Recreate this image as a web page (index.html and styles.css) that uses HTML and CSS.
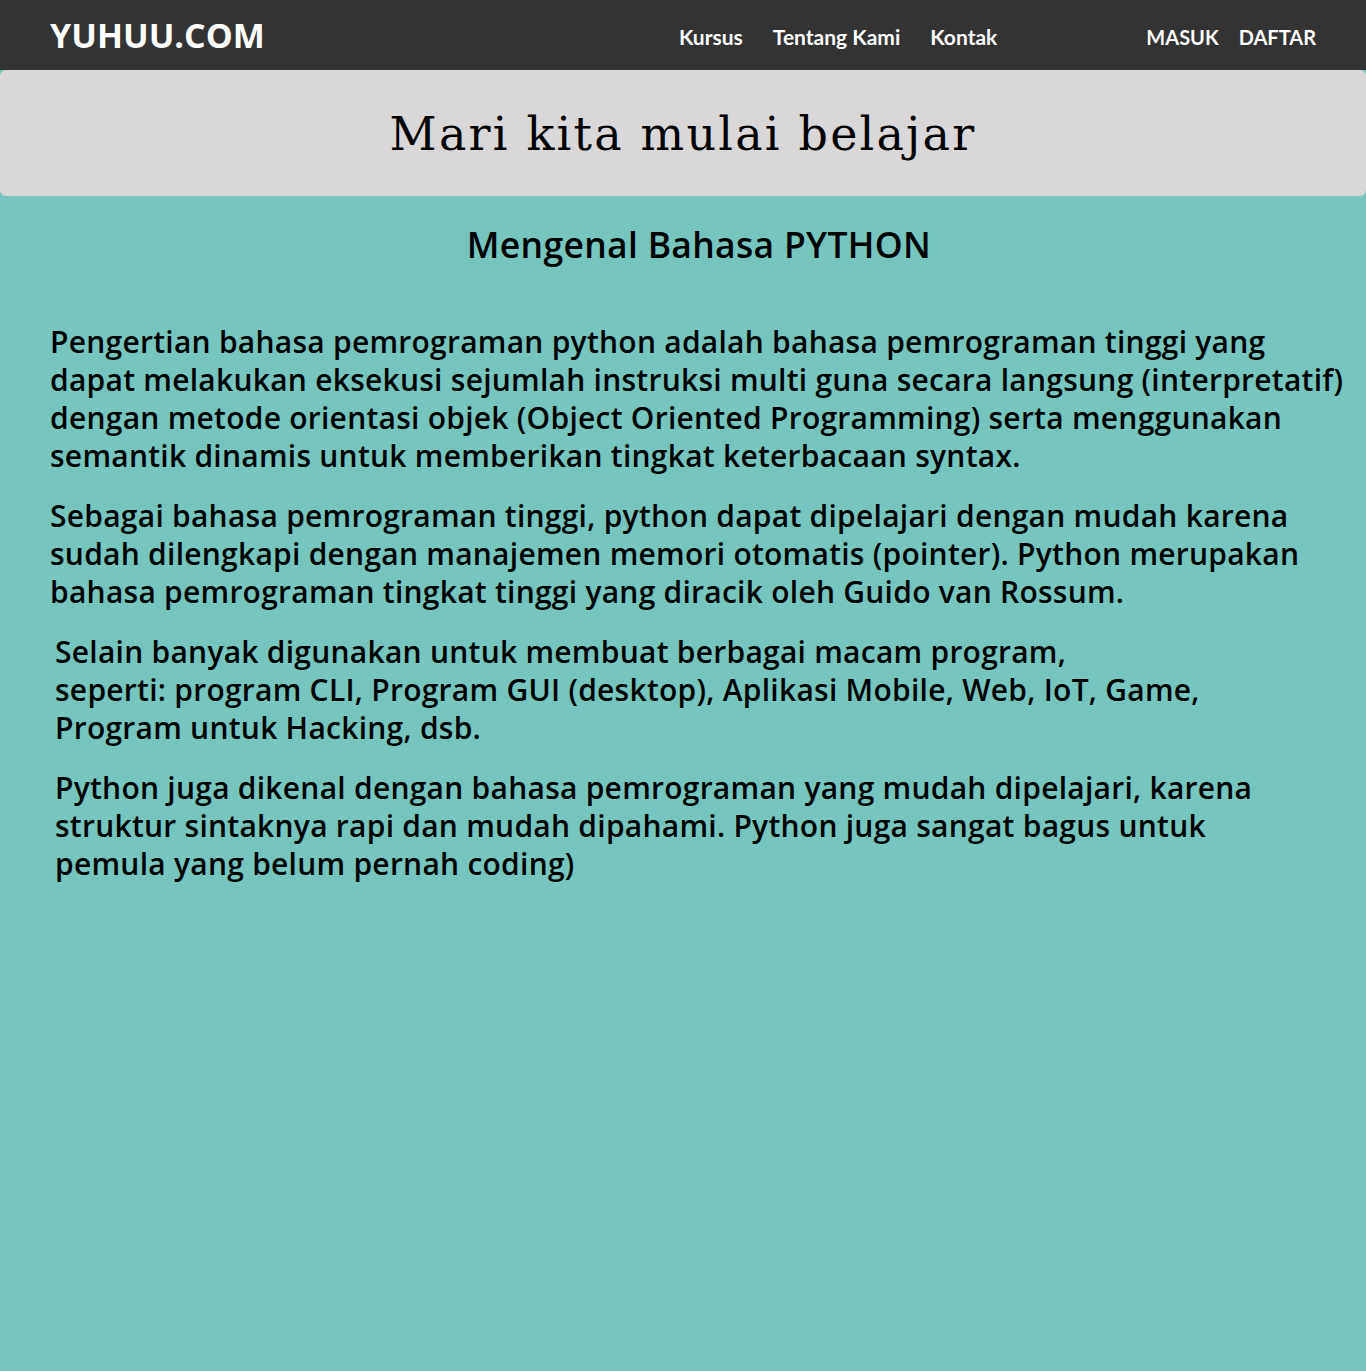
FILE: index.html
```html
<!DOCTYPE html>
<html lang="id">
<head>
<meta charset="utf-8">
<title>YUHUU.COM</title>
<link rel="stylesheet" href="styles.css">
</head>
<body>
<header class="topbar">
  <div class="logo">YUHUU.COM</div>
  <nav class="menu">
    <a href="#">Kursus</a>
    <a href="#">Tentang Kami</a>
    <a href="#">Kontak</a>
  </nav>
  <div class="auth">
    <a href="#">MASUK</a>
    <a href="#">DAFTAR</a>
  </div>
</header>
<section class="hero">
  <h1>Mari kita mulai belajar</h1>
</section>
<main class="content">
  <h2>Mengenal Bahasa PYTHON</h2>
  <p>Pengertian bahasa pemrograman python adalah bahasa pemrograman tinggi yang<br>dapat melakukan eksekusi sejumlah instruksi multi guna secara langsung (interpretatif)<br>dengan metode orientasi objek (Object Oriented Programming) serta menggunakan<br>semantik dinamis untuk memberikan tingkat keterbacaan syntax.</p>
  <p>Sebagai bahasa pemrograman tinggi, python dapat dipelajari dengan mudah karena<br>sudah dilengkapi dengan manajemen memori otomatis (pointer). Python merupakan<br>bahasa pemrograman tingkat tinggi yang diracik oleh Guido van Rossum.</p>
  <p class="indent">Selain banyak digunakan untuk membuat berbagai macam program,<br>seperti: program CLI, Program GUI (desktop), Aplikasi Mobile, Web, IoT, Game,<br>Program untuk Hacking, dsb.</p>
  <p class="indent">Python juga dikenal dengan bahasa pemrograman yang mudah dipelajari, karena<br>struktur sintaknya rapi dan mudah dipahami. Python juga sangat bagus untuk<br>pemula yang belum pernah coding)</p>
</main>
</body>
</html>
```

FILE: styles.css
```css
html, body {
  margin: 0;
  padding: 0;
}
body {
  background: #76c6bf;
  min-height: 1371px;
  font-family: "Open Sans", "Noto Sans", sans-serif;
  color: #000;
}
.topbar {
  height: 70px;
  background: #333333;
  display: flex;
  align-items: center;
  padding: 3px 50px 0;
  box-sizing: border-box;
}
.logo {
  color: #fff;
  font-family: "Open Sans", sans-serif;
  font-weight: 700;
  font-size: 34px;
  width: 629px;
  margin-top: -4px;
}
.menu {
  display: flex;
  gap: 30px;
  flex: 1;
}
.menu a, .auth a {
  color: #fff;
  text-decoration: none;
  font-family: "Lato", sans-serif;
  font-weight: 700;
  font-size: 20px;
}
.menu a {
  font-size: 21px;
}
.auth {
  display: flex;
  gap: 20px;
}
.hero {
  background: #d9d7d8;
  height: 126px;
  border-radius: 6px;
  display: flex;
  align-items: center;
  justify-content: center;
}
.hero h1 {
  margin: 0;
  font-family: "DejaVu Serif", serif;
  font-weight: 400;
  font-size: 46px;
  letter-spacing: 2.2px;
  padding-top: 2px;
}
.content {
  padding: 0 40px 0 50px;
}
.content h2 {
  margin: 26px 0 0;
  text-align: center;
  font-family: "Open Sans", sans-serif;
  font-weight: 600;
  font-size: 35.5px;
  letter-spacing: 0.3px;
  line-height: 44px;
  padding-left: 22px;
}
.content p {
  margin: 57px 0 0;
  font-family: "Open Sans", sans-serif;
  font-weight: 600;
  font-size: 30px;
  letter-spacing: 0.25px;
  line-height: 38px;
  white-space: nowrap;
}
.content p + p {
  margin-top: 22px;
}
.content p.indent {
  padding-left: 5px;
}
```
